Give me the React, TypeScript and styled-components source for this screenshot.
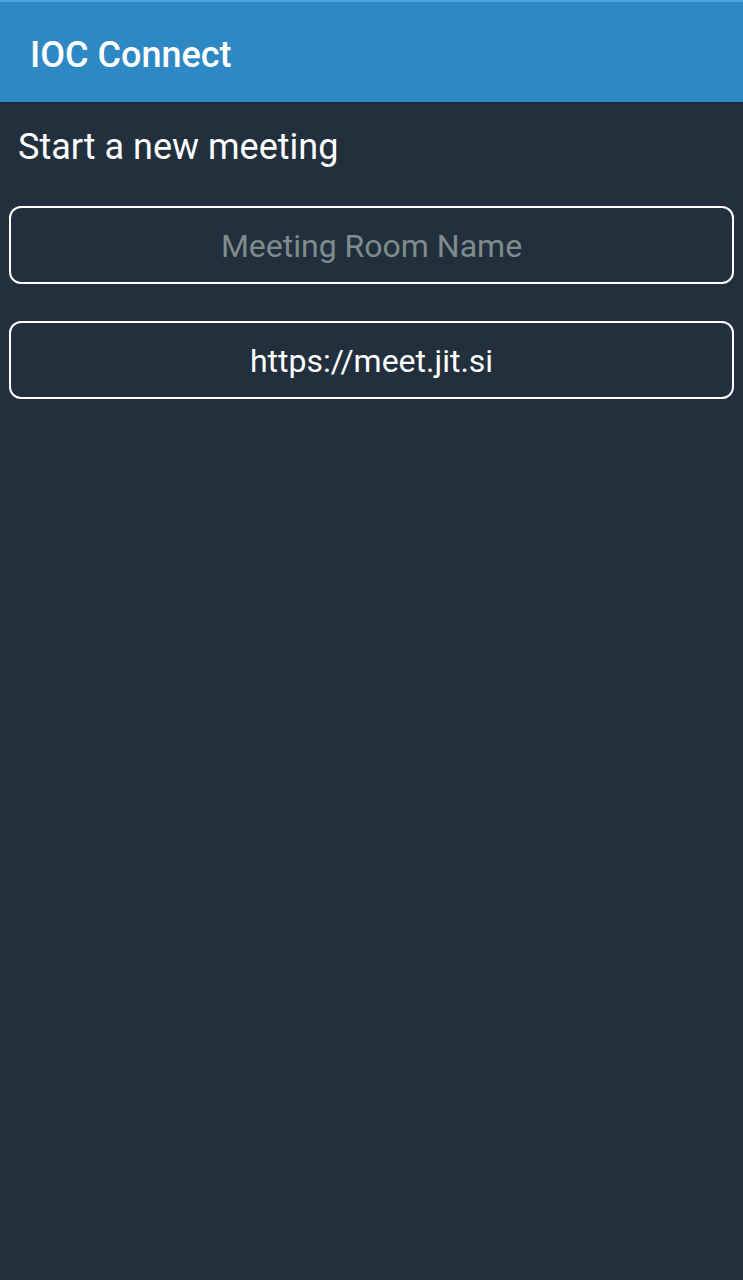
import React from "react";
import styled, { createGlobalStyle } from "styled-components";

const GlobalStyle = createGlobalStyle`
  html, body {
    margin: 0;
    padding: 0;
    background: #222f3c;
    font-family: Roboto, "Noto Sans", "Liberation Sans", sans-serif;
  }
  * { box-sizing: border-box; }
`;

const Screen = styled.div`
  width: 743px;
  min-height: 1280px;
  background: #222f3c;
  display: flex;
  flex-direction: column;
`;

const Header = styled.header`
  height: 104px;
  background: #2e88c4;
  border-top: 2px solid #4ea4e2;
  border-bottom: 2px solid #1b2a38;
  display: flex;
  align-items: center;
  padding: 5px 0 0 30px;
`;

const Title = styled.h1`
  margin: 0;
  color: #ffffff;
  font-size: 36px;
  font-weight: 500;
  letter-spacing: 0;
`;

const Content = styled.main`
  display: flex;
  flex-direction: column;
  padding: 0 9px;
`;

const Heading = styled.h2`
  margin: 0;
  padding: 19px 0 0 9px;
  height: 102px;
  color: #ffffff;
  font-size: 36px;
  font-weight: 400;
  line-height: 48px;
`;

const Field = styled.input`
  width: 725px;
  height: 78px;
  margin-bottom: 37px;
  border: 2px solid #ffffff;
  border-radius: 12px;
  background: transparent;
  color: #ffffff;
  text-align: center;
  font-family: Roboto, "Noto Sans", "Liberation Sans", sans-serif;
  font-size: 32px;
  outline: none;
  padding: 2px 10px 0;
  &::placeholder {
    color: #7f8c8d;
    opacity: 1;
  }
`;

export default function App() {
  return (
    <Screen>
      <GlobalStyle />
      <Header>
        <Title>IOC Connect</Title>
      </Header>
      <Content>
        <Heading>Start a new meeting</Heading>
        <Field placeholder="Meeting Room Name" readOnly />
        <Field defaultValue="https://meet.jit.si" readOnly />
      </Content>
    </Screen>
  );
}
